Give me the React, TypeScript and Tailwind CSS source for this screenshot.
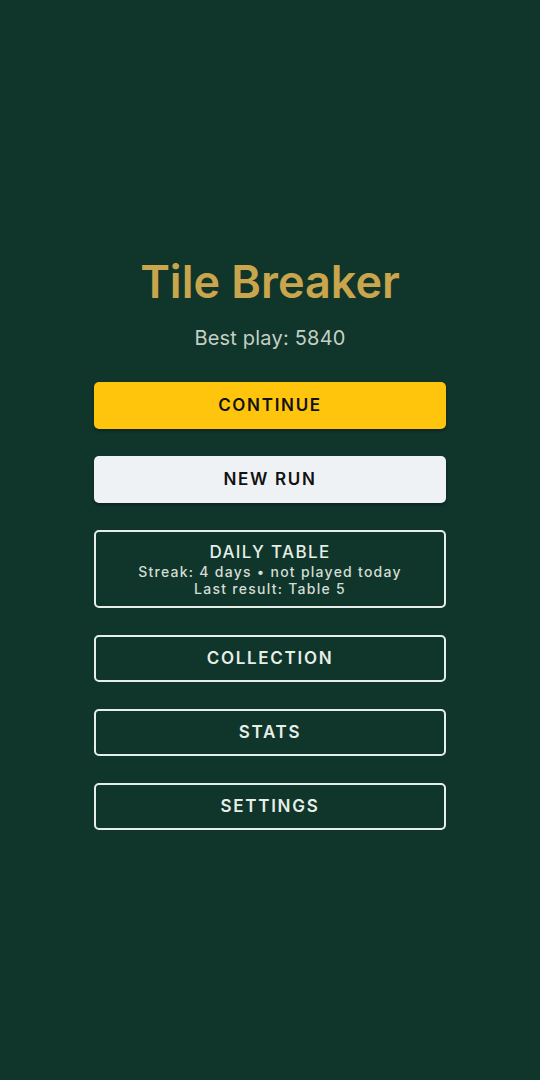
import React from 'react';

const font = { fontFamily: 'Inter, "Noto Sans", sans-serif' };

const OutlineButton: React.FC<{ label: string }> = ({ label }) => (
  <button className="w-full h-[47px] rounded-[5px] border-2 border-[#e6eee8] text-[#e6eee8] text-[17px] font-semibold tracking-[0.1em]">
    {label}
  </button>
);

export default function App() {
  return (
    <div
      className="min-h-screen w-full bg-[#10352a] flex flex-col items-center justify-center pt-2"
      style={font}
    >
      <h1 className="text-[45px] leading-[48px] font-semibold text-[#c9a54e]">Tile Breaker</h1>
      <p className="mt-[18px] text-[20px] leading-[28px] tracking-[0.01em] text-[#c5cfc6]">Best play: 5840</p>

      <div className="mt-[30px] w-[352px] flex flex-col gap-[27px]">
        <button className="w-full h-[47px] rounded-[5px] bg-[#fec50c] text-[#111111] text-[17px] font-semibold tracking-[0.1em] shadow-[0_2px_3px_rgba(0,0,0,0.3)]">
          CONTINUE
        </button>
        <button className="w-full h-[47px] rounded-[5px] bg-[#eff2f5] text-[#111111] text-[17px] font-semibold tracking-[0.1em] shadow-[0_2px_3px_rgba(0,0,0,0.3)]">
          NEW RUN
        </button>
        <button className="w-full h-[78px] rounded-[5px] border-2 border-[#e6eee8] text-[#e6eee8] flex flex-col items-center justify-center">
          <span className="text-[17px] leading-[22px] font-medium tracking-[0.08em]">DAILY TABLE</span>
          <span className="text-[14px] leading-[17px] font-medium tracking-[0.09em] text-[#d3ddd5]">
            Streak: 4 days • not played today
          </span>
          <span className="text-[14px] leading-[17px] font-medium tracking-[0.09em] text-[#d3ddd5]">
            Last result: Table 5
          </span>
        </button>
        <OutlineButton label="COLLECTION" />
        <OutlineButton label="STATS" />
        <OutlineButton label="SETTINGS" />
      </div>
    </div>
  );
}
